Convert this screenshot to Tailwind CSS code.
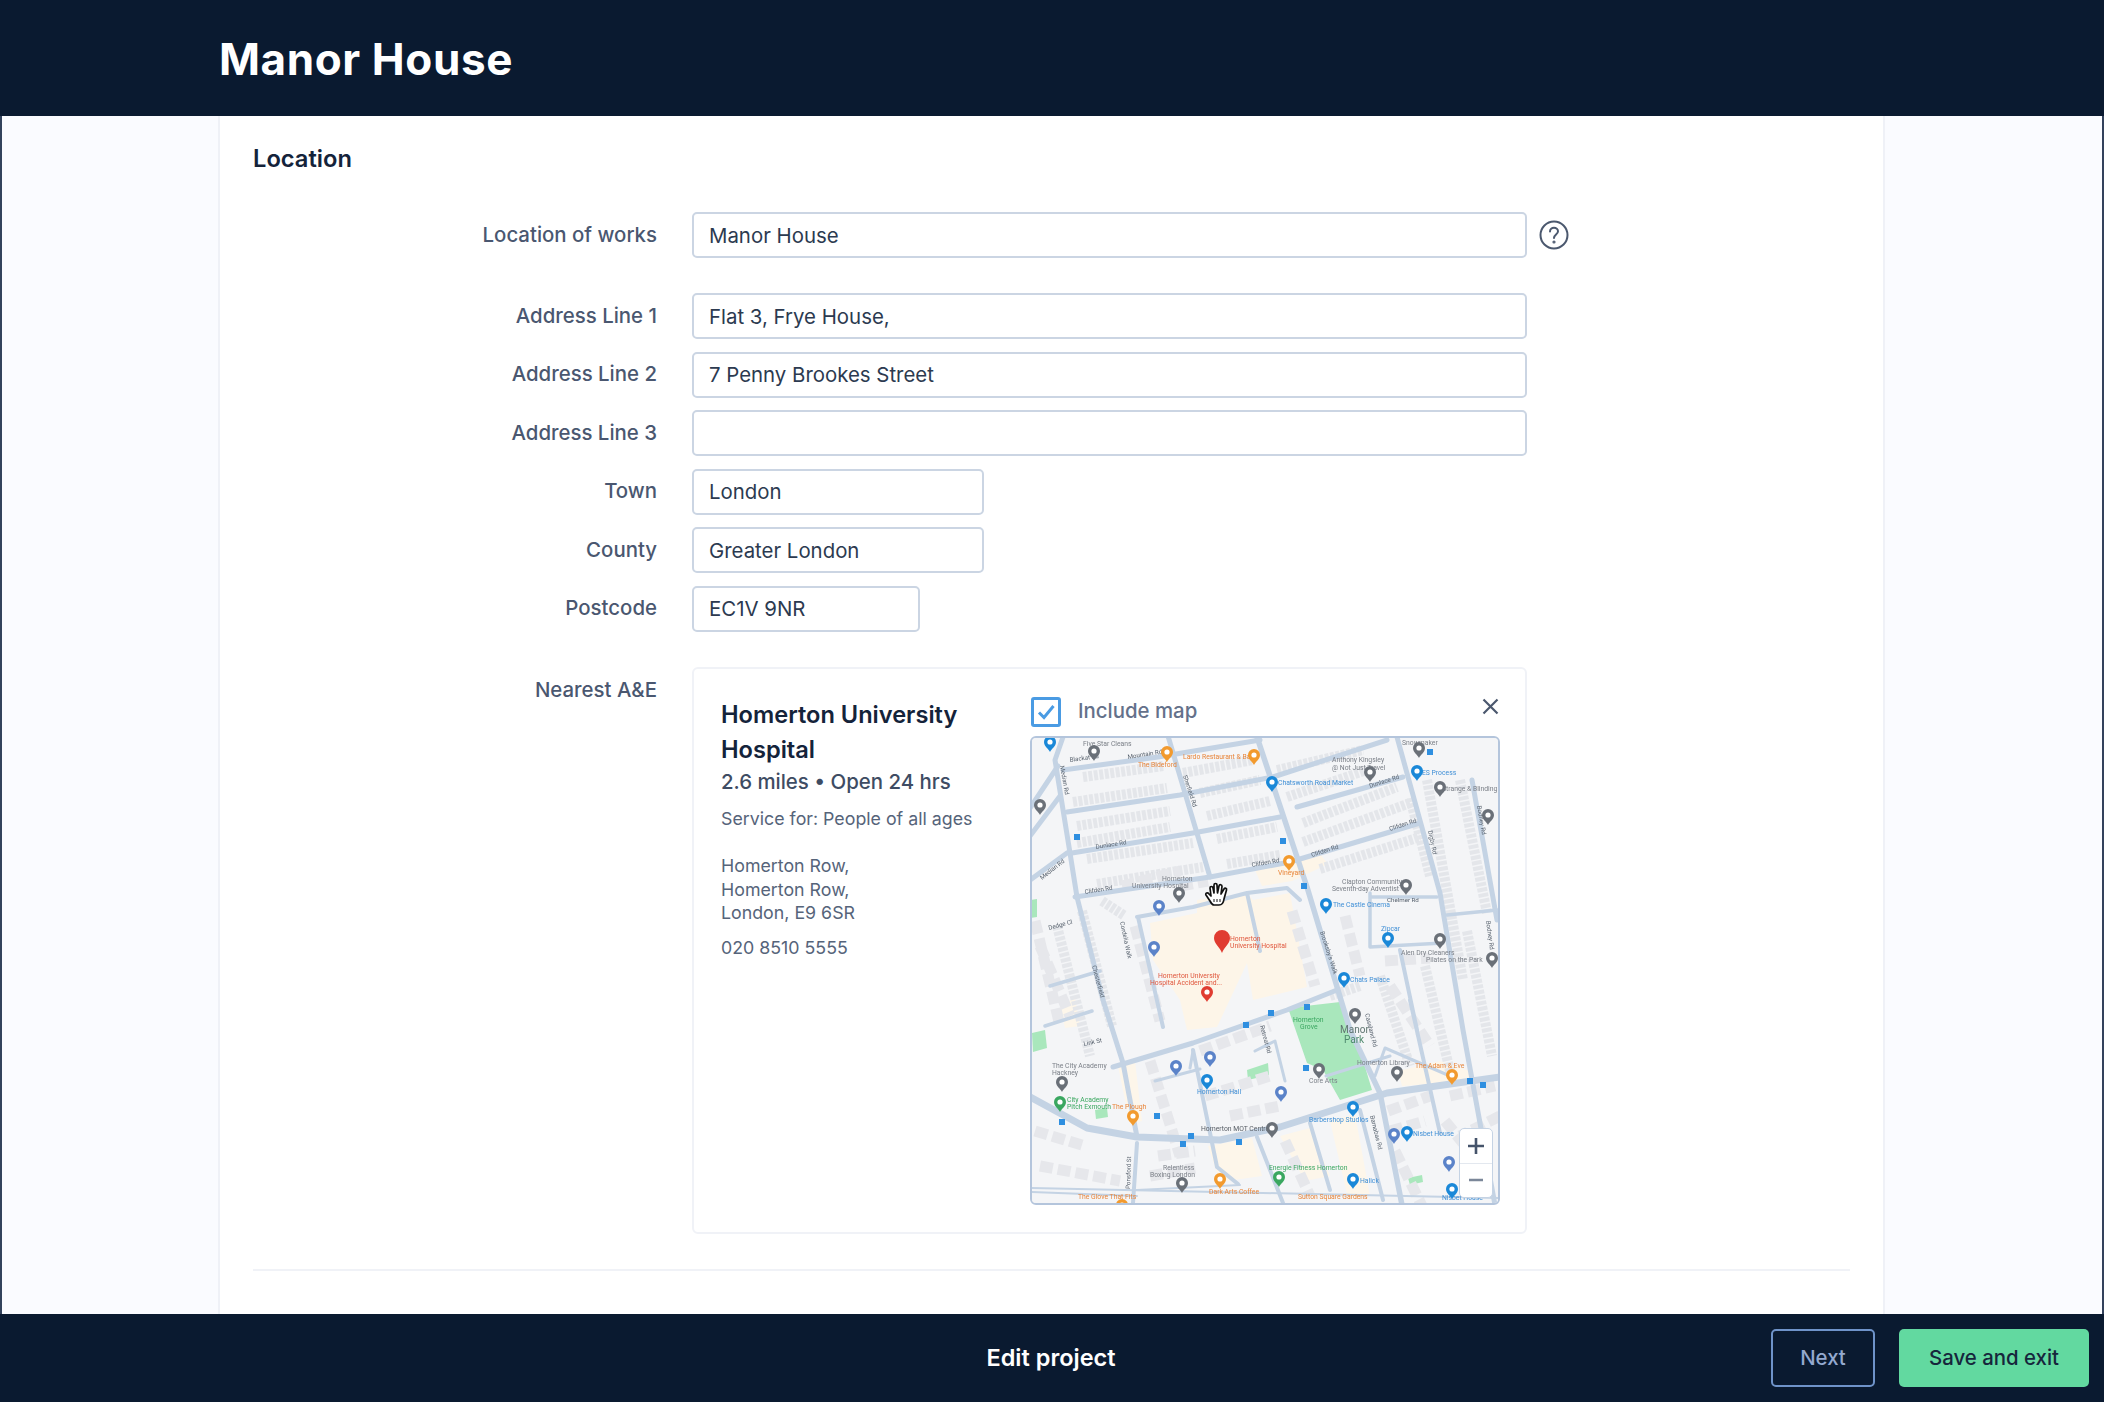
<!DOCTYPE html>
<html lang="en">
<head>
<meta charset="utf-8">
<title>Manor House</title>
<script src="https://cdn.jsdelivr.net/npm/@tailwindcss/browser@4"></script>
</head>
<body class="font-['Inter',sans-serif] text-[20.4px] text-[#2c3a50] bg-white">
<div class="flex flex-col w-[2104px] h-[1402px] overflow-hidden">

    <!-- Cabeçalho -->
    <header class="h-[116px] shrink-0 bg-[#0a1a30] flex items-center pl-[219px]">
        <h1 class="font-bold text-[44px] tracking-[0.6px] text-white pt-[1px]">Manor House</h1>
    </header>

    <div class="flex-1 flex bg-[#fafbff] border-x-2 border-[#33425c] min-h-0">
        <main class="ml-[216px] w-[1667px] bg-white border-x-2 border-[#eff1f7] pt-[27px] px-[33px]">
            <h2 class="text-[23.7px] leading-[32px] font-semibold text-[#14233a]">Location</h2>

            <div class="mt-[37px] flex items-center">
                <label for="location" class="w-[404px] text-right font-medium text-[#4a5770]">Location of works</label>
                <input id="location" type="text" value="Manor House" class="ml-[35px] w-[835px] h-[46px] px-[15px] rounded-[5px] border-2 border-[#cbd5e3] text-[#2c3a50] outline-none">
                <svg class="ml-[12px]" width="30" height="30" viewBox="0 0 30 30" fill="none" stroke="#4b586e" stroke-width="2" stroke-linecap="round">
                    <circle cx="15" cy="15" r="13.5"/>
                    <path d="M11 11.5c0-2.4 1.9-3.8 4-3.8s4 1.4 4 3.6c0 3.2-4 3.3-4 6.7"/>
                    <circle cx="15" cy="22" r="0.6" fill="#4b586e"/>
                </svg>
            </div>

            <div class="mt-[35px] flex flex-col gap-[12.5px]">
                <div class="flex items-center">
                    <label class="w-[404px] text-right font-medium text-[#4a5770]">Address Line 1</label>
                    <input type="text" value="Flat 3, Frye House," class="ml-[35px] w-[835px] h-[46px] px-[15px] rounded-[5px] border-2 border-[#cbd5e3] text-[#2c3a50] outline-none">
                </div>
                <div class="flex items-center">
                    <label class="w-[404px] text-right font-medium text-[#4a5770]">Address Line 2</label>
                    <input type="text" value="7 Penny Brookes Street" class="ml-[35px] w-[835px] h-[46px] px-[15px] rounded-[5px] border-2 border-[#cbd5e3] text-[#2c3a50] outline-none">
                </div>
                <div class="flex items-center">
                    <label class="w-[404px] text-right font-medium text-[#4a5770]">Address Line 3</label>
                    <input type="text" class="ml-[35px] w-[835px] h-[46px] px-[15px] rounded-[5px] border-2 border-[#cbd5e3] text-[#2c3a50] outline-none">
                </div>
                <div class="flex items-center">
                    <label class="w-[404px] text-right font-medium text-[#4a5770]">Town</label>
                    <input type="text" value="London" class="ml-[35px] w-[292px] h-[46px] px-[15px] rounded-[5px] border-2 border-[#cbd5e3] text-[#2c3a50] outline-none">
                </div>
                <div class="flex items-center">
                    <label class="w-[404px] text-right font-medium text-[#4a5770]">County</label>
                    <input type="text" value="Greater London" class="ml-[35px] w-[292px] h-[46px] px-[15px] rounded-[5px] border-2 border-[#cbd5e3] text-[#2c3a50] outline-none">
                </div>
                <div class="flex items-center">
                    <label class="w-[404px] text-right font-medium text-[#4a5770]">Postcode</label>
                    <input type="text" value="EC1V 9NR" class="ml-[35px] w-[228px] h-[46px] px-[15px] rounded-[5px] border-2 border-[#cbd5e3] text-[#2c3a50] outline-none">
                </div>
            </div>

            <!-- Nearest A&E -->
            <div class="mt-[35px] flex items-start">
                <div class="w-[404px] text-right font-medium text-[#4a5770] pt-[8px]">Nearest A&amp;E</div>
                <div class="ml-[35px] w-[835px] h-[567px] rounded-[6px] border-2 border-[#f0f2f7] pl-[27px] pr-[25px] pt-[28px] flex">
                    <div class="flex-1">
                        <h3 class="text-[23.6px] leading-[35px] font-semibold text-[#14233a] w-[260px]">Homerton University Hospital</h3>
                        <p class="leading-[29px] font-medium text-[#3e4c63]">2.6 miles • Open 24 hrs</p>
                        <p class="mt-[10px] text-[17.8px] leading-[26px] text-[#56647a]">Service for: People of all ages</p>
                        <p class="mt-[22.5px] text-[17.8px] leading-[23.5px] text-[#56647a]">Homerton Row,<br>Homerton Row,<br>London, E9 6SR</p>
                        <p class="mt-[11px] text-[17.8px] leading-[23.5px] text-[#56647a]">020 8510 5555</p>
                    </div>
                    <div class="w-[470px] shrink-0">
                        <div class="flex items-center h-[30px] mb-[9px]">
                            <div class="ml-[1px] w-[30px] h-[30px] rounded-[3px] border-[3.5px] border-[#4a9be3] flex items-center justify-center">
                                <svg width="20" height="20" viewBox="0 0 20 20" fill="none" stroke="#4a9be3" stroke-width="3"><path d="M3 10.5l5 5L17.5 4"/></svg>
                            </div>
                            <span class="ml-[17px] text-[#64718a] font-medium">Include map</span>
                            <svg class="ml-auto mr-[1px] -mt-[10px]" width="17" height="17" viewBox="0 0 17 17" fill="none" stroke="#4b586e" stroke-width="2.2"><path d="M1.5 1.5l14 14M15.5 1.5l-14 14"/></svg>
                        </div>

                        <!-- Mapa -->
                        <div class="relative w-[470px] h-[469px] rounded-[6px] border-2 border-[#b4c5dc] overflow-hidden bg-[#f3f4f6]">
                            <svg class="block blur-[0.5px]" width="466" height="465" viewBox="2 2 466 465" font-family="Roboto, sans-serif" font-size="6.8">
                                <defs>
                                    <g id="pin">
                                        <path d="M0 9C-1.4 5.6-6 3.6-6-1A6 6 0 1 1 6-1C6 3.6 1.4 5.6 0 9Z"/>
                                        <circle cy="-1" r="2.6" fill="#fff"/>
                                    </g>
                                </defs>
                                <rect width="470" height="469" fill="#f4f5f7"/>

                                <!-- parques e hospital -->
                                <g fill="#a9e7bc">
                                    <path d="M258 272 310 266 330 314 342 354 310 364 293 334 277 327Z"/>
                                    <path d="M2 297 15 294 17 312 3 316Z"/>
                                    <path d="M217 334 238 327 239 339 218 344Z"/>
                                    <path d="M65 374 77 372 78 381 66 383Z"/>
                                    <path d="M378 442 392 439 393 446 380 449Z"/>
                                    <path d="M0 164 7 163 7 181 0 182Z"/>
                                </g>
                                <path d="M120 187 167 177 167 164 217 157 223 164 260 157 277 251 223 264 217 227 187 291 157 294 150 264 123 224Z" fill="#fdf5e8"/>
                                <path d="M225 134 290 118 298 128 262 145 232 150Z" fill="#fdf5e8"/>
                                <path d="M88 330 105 325 112 385 100 388ZM178 410 222 402 232 440 190 446ZM250 400 280 392 300 440 275 445ZM300 385 325 378 340 460 318 462Z" fill="#fdf6ea"/>
                                <path d="M368 335 410 325 440 335 440 345 372 350ZM30 270 45 262 50 290 35 292Z" fill="#fdf6ea"/>

                                <!-- quarteirões -->
                                <g fill="none" stroke="#e4e6ea" stroke-width="10" stroke-dasharray="4 1.5">
                                    <path d="M53 41 133 30M43 66 137 52M47 90 140 75M47 107 140 91M57 123 163 107M67 148 173 131"/>
                                    <path d="M153 37 223 24M170 57 230 44M177 80 240 65M187 103 247 91M197 128 250 119"/>
                                    <path d="M247 34 333 14M257 61 337 34M273 87 367 51M273 106 380 67M290 133 390 101"/>
                                    <path d="M397 44 433 244M430 44 457 177M380 62 400 140"/>
                                    <path d="M52 175 82 290M27 190 60 320M350 240 380 330M395 230 420 335M437 195 462 320"/>
                                    <path d="M72 165 95 180M300 260 330 250"/>
                                </g>
                                <g fill="none" stroke="#e6e7eb" stroke-width="11" stroke-dasharray="13 5">
                                    <path d="M5 185 30 290M10 210 40 280M105 190 130 285M120 325 150 420M170 315 240 290"/>
                                    <path d="M175 360 240 340M200 380 250 370M5 395 55 410M10 430 90 445M128 420 165 415M120 440 165 432"/>
                                    <path d="M255 405 280 460M358 375 400 360M360 395 395 385M365 415 392 470M420 360 465 350M415 385 460 440M470 380 430 400"/>
                                    <path d="M262 175 285 250M150 150 178 145M92 150 150 135M315 180 330 240M355 225 400 222M360 250 400 310"/>
                                </g>

                                <!-- ruas -->
                                <g fill="none" stroke="#c4d3e4" stroke-linecap="round" stroke-linejoin="round" stroke-width="5">
                                    <path d="M33 1 25 24 40 117 47 161 73 264 93 327 107 401"/>
                                    <path d="M33 34 128 21 230 4"/>
                                    <path d="M37 76 150 59 243 41 357 4"/>
                                    <path d="M42 117 163 97 250 81M267 71 373 41"/>
                                    <path d="M45 161 180 141 260 126 390 87"/>
                                    <path d="M138 0 180 141"/>
                                    <path d="M227 1 277 151 320 294 350 357 372 469" stroke-width="5.5"/>
                                    <path d="M367 1 410 157 433 294 465 469"/>
                                    <path d="M442 44 467 184"/>
                                    <path d="M0 361 57 392 107 401 190 404 250 391 357 357 470 341" stroke-width="7"/>
                                    <path d="M83 331 163 307 257 274 307 254"/>
                                    <path d="M0 144 37 117M0 100 30 60M0 72 28 30"/>
                                    <path d="M380 264 410 397M370 214 387 294" stroke-width="4"/>
                                    <path d="M163 314 187 431 208 448M227 401 253 467M107 407 103 467M280 387 300 454M330 374 353 464" stroke-width="4"/>
                                    <path d="M107 181 163 171 217 157 257 152 270 164M108 181 133 291M217 157 230 215" stroke-width="4"/>
                                    <path d="M340 157 340 211 413 207M340 161 407 161M417 179 467 174M20 250 70 235M15 290 62 275" stroke-width="3.5"/>
                                    <path d="M107 454 210 449M0 456 107 460M0 452 470 462" stroke-width="2"/>
                                    <path d="M125 345 170 333M225 315 245 305 255 345M345 340 355 312 420 340M160 332 163 315M296 340 360 320" stroke-width="3"/>
                                </g>

                                <!-- nomes de ruas -->
                                <g fill="#59636f" font-size="6.2">
                                    <text x="40" y="26" transform="rotate(-8 40 26)">Blackat Rd</text>
                                    <text x="98" y="23" transform="rotate(-9 98 23)">Mountain Rd</text>
                                    <text x="66" y="113" transform="rotate(-9 66 113)">Dunlace Rd</text>
                                    <text x="340" y="52" transform="rotate(-18 340 52)">Dunlace Rd</text>
                                    <text x="55" y="158" transform="rotate(-9 55 158)">Clifden Rd</text>
                                    <text x="222" y="131" transform="rotate(-10 222 131)">Clifden Rd</text>
                                    <text x="282" y="121" transform="rotate(-18 282 121)">Clifden Rd</text>
                                    <text x="360" y="95" transform="rotate(-18 360 95)">Clifden Rd</text>
                                    <text x="153" y="40" transform="rotate(72 153 40)">Sherfield Rd</text>
                                    <text x="30" y="30" transform="rotate(80 30 30)">Median Rd</text>
                                    <text x="12" y="144" transform="rotate(-38 12 144)">Median Rd</text>
                                    <text x="19" y="194" transform="rotate(-15 19 194)">Dedge Cl</text>
                                    <text x="90" y="186" transform="rotate(78 90 186)">Cordelia Walk</text>
                                    <text x="62" y="230" transform="rotate(75 62 230)">Chesterfield</text>
                                    <text x="290" y="196" transform="rotate(72 290 196)">Brooksby's Walk</text>
                                    <text x="398" y="95" transform="rotate(78 398 95)">Digby Rd</text>
                                    <text x="447" y="70" transform="rotate(80 447 70)">Bodney Rd</text>
                                    <text x="357" y="166">Chelmer Rd</text>
                                    <text x="456" y="185" transform="rotate(82 456 185)">Bodney Rd</text>
                                    <text x="230" y="290" transform="rotate(75 230 290)">Retreat Rd</text>
                                    <text x="335" y="278" transform="rotate(76 335 278)">Cassland Rd</text>
                                    <text x="340" y="380" transform="rotate(76 340 380)">Barnabas Rd</text>
                                    <text x="100" y="453" transform="rotate(-88 100 453)">Ponsford St</text>
                                    <text x="54" y="310" transform="rotate(-12 54 310)">Link St</text>
                                </g>

                                <!-- locais -->
                                <g fill="#7a7f87">
                                    <text x="53" y="10">Five Star Cleans</text>
                                    <text x="302" y="26">Anthony Kingsley</text>
                                    <text x="302" y="34">@ Not Just Travel</text>
                                    <text x="412" y="55">Strange &amp; Blinding</text>
                                    <text x="372" y="9">Snowmaker</text>
                                    <text x="132" y="145">Homerton</text>
                                    <text x="102" y="152">University Hospital</text>
                                    <text x="312" y="148">Clapton Community</text>
                                    <text x="302" y="155">Seventh-day Adventist</text>
                                    <text x="371" y="219">Alen Dry Cleaners</text>
                                    <text x="396" y="226">Pilates on the Park</text>
                                    <text x="22" y="332">The City Academy</text>
                                    <text x="22" y="339">Hackney</text>
                                    <text x="279" y="347">Core Arts</text>
                                    <text x="327" y="329">Homerton Library</text>
                                    <text x="171" y="395" fill="#555b63">Homerton MOT Centre</text>
                                    <text x="133" y="434">Relentless</text>
                                    <text x="120" y="441">Boxing London</text>
                                </g>
                                <g fill="#e8853a">
                                    <text x="108" y="31">The Bideford</text>
                                    <text x="153" y="23">Lardo Restaurant &amp; Bar</text>
                                    <text x="248" y="139">Vineyard</text>
                                    <text x="385" y="332">The Adam &amp; Eve</text>
                                    <text x="82" y="373">The Plough</text>
                                    <text x="179" y="458">Dark Arts Coffee</text>
                                    <text x="48" y="463">The Glove That Fits</text>
                                    <text x="268" y="463">Sutton Square Gardens</text>
                                </g>
                                <g fill="#e0563c">
                                    <text x="200" y="205">Homerton</text>
                                    <text x="200" y="212">University Hospital</text>
                                    <text x="128" y="242">Homerton University</text>
                                    <text x="120" y="249">Hospital Accident and...</text>
                                </g>
                                <g fill="#3f8fd6">
                                    <text x="248" y="49">Chatsworth Road Market</text>
                                    <text x="392" y="39">ES Process</text>
                                    <text x="303" y="171">The Castle Cinema</text>
                                    <text x="351" y="195">Zipcar</text>
                                    <text x="320" y="246">Chats Palace</text>
                                    <text x="167" y="358">Homerton Hall</text>
                                    <text x="279" y="386">Barbershop Studios</text>
                                    <text x="383" y="400">Nisbet House</text>
                                    <text x="330" y="447">Halick</text>
                                    <text x="412" y="464">Nisbet House</text>
                                </g>
                                <g fill="#3aa760">
                                    <text x="263" y="286">Homerton</text>
                                    <text x="270" y="293">Grove</text>
                                    <text x="37" y="366">City Academy</text>
                                    <text x="37" y="373">Pitch Exmouth</text>
                                    <text x="239" y="434">Energie Fitness Homerton</text>
                                </g>
                                <text x="310" y="297" font-size="10" fill="#5f7470">Manor</text>
                                <text x="314" y="307" font-size="10" fill="#4f8a6f">Park</text>

                                <!-- pinos -->
                                <g fill="#6a7078">
                                    <use href="#pin" x="64" y="16"/><use href="#pin" x="389" y="13"/><use href="#pin" x="340" y="37"/>
                                    <use href="#pin" x="410" y="52"/><use href="#pin" x="10" y="70"/><use href="#pin" x="458" y="80"/>
                                    <use href="#pin" x="149" y="158"/><use href="#pin" x="376" y="150"/><use href="#pin" x="410" y="204"/>
                                    <use href="#pin" x="462" y="223"/><use href="#pin" x="325" y="279"/><use href="#pin" x="32" y="347"/>
                                    <use href="#pin" x="289" y="334"/><use href="#pin" x="367" y="337"/><use href="#pin" x="242" y="393"/>
                                    <use href="#pin" x="152" y="448"/>
                                </g>
                                <g fill="#1a88d8">
                                    <use href="#pin" x="20" y="7"/><use href="#pin" x="242" y="47"/><use href="#pin" x="387" y="36"/>
                                    <use href="#pin" x="296" y="169"/><use href="#pin" x="358" y="203"/><use href="#pin" x="314" y="243"/>
                                    <use href="#pin" x="177" y="345"/><use href="#pin" x="323" y="372"/><use href="#pin" x="377" y="397"/>
                                    <use href="#pin" x="422" y="454"/><use href="#pin" x="323" y="444"/>
                                </g>
                                <g fill="#5b83c9">
                                    <use href="#pin" x="129" y="171"/><use href="#pin" x="124" y="212"/><use href="#pin" x="146" y="331"/>
                                    <use href="#pin" x="180" y="322"/><use href="#pin" x="251" y="357"/><use href="#pin" x="364" y="399"/>
                                    <use href="#pin" x="419" y="427"/>
                                </g>
                                <g fill="#f29a2e">
                                    <use href="#pin" x="137" y="17"/><use href="#pin" x="224" y="20"/><use href="#pin" x="259" y="126"/>
                                    <use href="#pin" x="422" y="340"/><use href="#pin" x="103" y="381"/><use href="#pin" x="190" y="444"/>
                                    <use href="#pin" x="92" y="470"/>
                                </g>
                                <g fill="#3aa760"><use href="#pin" x="30" y="367"/><use href="#pin" x="249" y="442"/></g>
                                <use href="#pin" x="177" y="257" fill="#e03c31"/>
                                <path d="M192 217C190 211 184 208 184 202A8 8 0 1 1 200 202C200 208 194 211 192 217Z" fill="#e03c31"/>

                                <!-- transporte -->
                                <g fill="#2f8fe0">
                                    <rect x="44" y="98" width="6" height="6"/><rect x="250" y="102" width="6" height="6"/><rect x="271" y="147" width="6" height="6"/>
                                    <rect x="397" y="13" width="6" height="6"/><rect x="274" y="268" width="6" height="6"/><rect x="238" y="274" width="6" height="6"/>
                                    <rect x="213" y="286" width="6" height="6"/><rect x="124" y="377" width="6" height="6"/><rect x="29" y="383" width="6" height="6"/>
                                    <rect x="150" y="405" width="6" height="6"/><rect x="273" y="329" width="6" height="6"/><rect x="437" y="342" width="6" height="6"/>
                                    <rect x="450" y="346" width="6" height="6"/><rect x="158" y="397" width="6" height="6"/><rect x="206" y="403" width="6" height="6"/>
                                </g>

                                <!-- cursor -->
                                <g transform="translate(187 159)" fill="#fff" stroke="#111" stroke-width="1.7" stroke-linejoin="round">
                                    <path d="M-7 6-11 0C-12-2-9.5-3-8-1L-6 1-7-7C-7-9-4.5-9-4-7L-3-2-3-10C-3-12 0-12 0-10L.5-2 2-9C2.5-11 5-10.5 5-8.5L4-1 7-6C8-7.5 10-6.5 9.5-5L7 4C6.5 8 5 10 2 10L-3 10C-5 10-6 8-7 6Z"/>
                                    <path d="M-3 4V7M0 4V7M3 4V7" stroke-width="1" fill="none"/>
                                </g>
                            </svg>

                            <!-- Zoom -->
                            <div class="absolute left-[427px] top-[390px] w-[34px] h-[70px] rounded-[5px] bg-white border border-[#c5d3e4] flex flex-col items-center">
                                <div class="h-[35px] w-full border-b border-[#e3e8ef] flex items-center justify-center">
                                    <svg width="18" height="18" viewBox="0 0 18 18" stroke="#45536a" stroke-width="2.6"><path d="M9 1v16M1 9h16"/></svg>
                                </div>
                                <div class="h-[33px] flex items-center justify-center">
                                    <svg width="16" height="4" viewBox="0 0 16 4" stroke="#7b8799" stroke-width="2.4"><path d="M1 2h14"/></svg>
                                </div>
                            </div>
                        </div>
                    </div>
                </div>
            </div>

            <div class="mt-[35px] border-t-2 border-[#f0f2f7]"></div>
        </main>
    </div>

    <!-- Rodapé -->
    <footer class="h-[88px] shrink-0 bg-[#0a1a30] grid grid-cols-[1fr_auto_1fr] items-center">
        <div></div>
        <div class="mr-[2px] text-[23.5px] font-semibold text-white">Edit project</div>
        <div class="flex justify-end gap-[24px] pr-[15px]">
            <button type="button" class="w-[104px] h-[58px] rounded-[5px] border-2 border-[#6f93c9] text-[#94a9cf] font-medium">Next</button>
            <button type="button" class="w-[190px] h-[58px] rounded-[5px] bg-[#62d9a0] text-[#16263c] font-medium">Save and exit</button>
        </div>
    </footer>
</div>
</body>
</html>
